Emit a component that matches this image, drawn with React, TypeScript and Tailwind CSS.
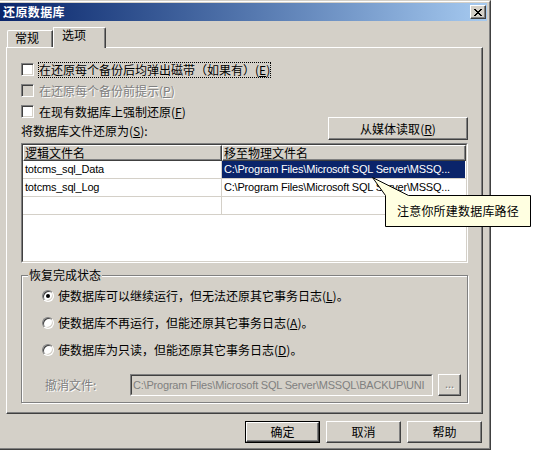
import type { ReactNode } from "react";

type FileRow = {
  name: string;
  path: string;
  selected?: boolean;
};

const fileRows: FileRow[] = [
  {
    name: "totcms_sql_Data",
    path: "C:\\Program Files\\Microsoft SQL Server\\MSSQ...",
    selected: true,
  },
  {
    name: "totcms_sql_Log",
    path: "C:\\Program Files\\Microsoft SQL Server\\MSSQ...",
  },
  { name: "", path: "" },
];

const raised =
  "border border-t-white border-l-white border-r-[#404040] border-b-[#404040] shadow-[inset_-1px_-1px_0_#808080] bg-[#d4d0c8]";

const disabledText = "text-[#808080] [text-shadow:1px_1px_0_#fff]";

function Key({ k }: { k: string }) {
  return (
    <>
      (<u>{k}</u>)
    </>
  );
}

function CheckBox({ disabled }: { disabled?: boolean }) {
  return (
    <span
      className={`block h-[13px] w-[13px] shrink-0 border border-t-[#808080] border-l-[#808080] border-r-white border-b-white shadow-[inset_1px_1px_0_#404040,inset_-1px_-1px_0_#d4d0c8] ${
        disabled ? "bg-[#d4d0c8]" : "bg-white"
      }`}
    />
  );
}

function CheckRow({
  children,
  disabled,
  focused,
}: {
  children: ReactNode;
  disabled?: boolean;
  focused?: boolean;
}) {
  return (
    <div className="flex h-[13px] items-center gap-[4px]">
      <CheckBox disabled={disabled} />
      <span
        className={`border leading-[14px] whitespace-nowrap ${
          focused ? "border-dotted border-black" : "border-transparent"
        } ${disabled ? disabledText : ""}`}
      >
        {children}
      </span>
    </div>
  );
}

function Radio({ checked }: { checked?: boolean }) {
  return (
    <span className="flex h-[12px] w-[12px] shrink-0 items-center justify-center rounded-full border border-t-[#808080] border-l-[#808080] border-r-white border-b-white bg-white shadow-[inset_1px_1px_0_#404040,inset_-1px_-1px_0_#d4d0c8]">
      {checked ? <span className="h-[4px] w-[4px] rounded-full bg-black" /> : null}
    </span>
  );
}

function RadioRow({ children, checked }: { children: ReactNode; checked?: boolean }) {
  return (
    <div className="flex h-[14px] items-center gap-[4px] whitespace-nowrap leading-[14px]">
      <Radio checked={checked} />
      <span>{children}</span>
    </div>
  );
}

function CloseGlyph() {
  return (
    <svg width="8" height="7" viewBox="0 0 8 7" shapeRendering="crispEdges">
      <path
        fill="#000"
        d="M0 0h2v1h-2z M6 0h2v1h-2z M1 1h2v1h-2z M5 1h2v1h-2z M2 2h4v1h-4z M3 3h2v1h-2z M2 4h4v1h-4z M1 5h2v1h-2z M5 5h2v1h-2z M0 6h2v1h-2z M6 6h2v1h-2z"
      />
    </svg>
  );
}

function FileList() {
  return (
    <div className="mt-[3px] h-[120px] border border-t-[#808080] border-l-[#808080] border-r-white border-b-white">
      <div className="h-full border border-t-[#404040] border-l-[#404040] border-r-[#d4d0c8] border-b-[#d4d0c8] bg-white">
        <div className="flex h-[16px] leading-[14px]">
          <div className={`w-[199px] pl-[1px] ${raised}`}>逻辑文件名</div>
          <div className={`flex-1 pl-[1px] ${raised}`}>移至物理文件名</div>
        </div>
        <div className="[font-family:'Liberation_Sans','Noto_Sans_CJK_SC',sans-serif] text-[11px] tracking-[-0.2px]">
          {fileRows.map((row, i) => (
            <div key={i} className="flex h-[18px] border-b border-[#d4d0c8]">
              <div className="flex w-[199px] items-center border-r border-[#d4d0c8] pl-[2px]">
                {row.name}
              </div>
              <div
                className={`flex w-[243px] items-center pl-[2px] whitespace-nowrap ${
                  row.selected ? "bg-[#0a246a] text-white" : ""
                }`}
              >
                {row.path}
              </div>
            </div>
          ))}
        </div>
      </div>
    </div>
  );
}

function RecoveryGroup() {
  return (
    <div className="mt-[12px] flex h-[128px] flex-col border border-[#808080] shadow-[1px_1px_0_#fff,inset_1px_1px_0_#fff]">
      <span className="-mt-[8px] ml-[6px] h-[14px] w-fit bg-[#d4d0c8] px-[1px] leading-[14px]">
        恢复完成状态
      </span>
      <div className="mt-[7px] flex flex-col gap-[13px] pl-[20px]">
        <RadioRow checked>
          使数据库可以继续运行，但无法还原其它事务日志<Key k="L" />。
        </RadioRow>
        <RadioRow>
          使数据库不再运行，但能还原其它事务日志<Key k="A" />。
        </RadioRow>
        <RadioRow>
          使数据库为只读，但能还原其它事务日志<Key k="D" />。
        </RadioRow>
      </div>
      <div className="mt-[17px] flex h-[22px] items-center pl-[23px]">
        <span className={`w-[85px] leading-[14px] ${disabledText}`}>撤消文件:</span>
        <div className="h-[22px] w-[303px] border border-t-[#808080] border-l-[#808080] border-r-white border-b-white">
          <div className="flex h-full items-center overflow-hidden border border-t-[#404040] border-l-[#404040] border-r-[#d4d0c8] border-b-[#d4d0c8] pl-[1px] whitespace-nowrap [font-family:'Liberation_Sans',sans-serif] text-[11px] tracking-[-0.2px] text-[#808080]">
            C:\Program Files\Microsoft SQL Server\MSSQL\BACKUP\UNI
          </div>
        </div>
        <div
          className={`ml-[5px] flex h-[22px] w-[23px] items-center justify-center pb-[3px] text-[11px] ${raised} ${disabledText}`}
        >
          ...
        </div>
      </div>
    </div>
  );
}

export default function App() {
  return (
    <div className="relative h-[450px] w-[539px] overflow-hidden bg-white text-[12px] text-black [font-family:'Noto_Sans_CJK_SC',sans-serif]">
      <div className="h-[450px] w-[491px] border-t border-r border-b border-t-[#d4d0c8] border-r-[#404040] border-b-[#404040] bg-[#d4d0c8]">
        <div className="flex h-full flex-col border-t border-r border-b border-t-white border-r-[#808080] border-b-[#808080] pt-[1px]">
          {/* title bar */}
          <div className="mr-[2px] flex h-[18px] items-center justify-between bg-linear-to-r from-[#0a246a] to-[#a6caf0] pl-[3px] pr-[1px]">
            <span className="font-bold leading-[14px] tracking-[0.4px] text-white">还原数据库</span>
            <span className={`flex h-[14px] w-[16px] items-center justify-center ${raised}`}>
              <CloseGlyph />
            </span>
          </div>

          {/* tabs */}
          <div className="relative z-10 -mb-px ml-[7px] mt-[6px] flex items-start leading-[14px]">
            <div className="mt-[3px] h-[17px] w-[46px] rounded-tl-[2px] border-t border-l border-r border-t-white border-l-white border-r-[#404040] pl-[7px] shadow-[inset_-1px_0_0_#808080]">
              常规
            </div>
            <div className="h-[21px] w-[53px] rounded-tr-[2px] border-t border-l border-r border-t-white border-l-white border-r-[#404040] bg-[#d4d0c8] pl-[8px] shadow-[inset_-1px_0_0_#808080]">
              选项
            </div>
          </div>

          {/* tab page */}
          <div className="ml-[6px] flex h-[367px] w-[477px] flex-col border border-t-white border-l-white border-r-[#404040] border-b-[#404040] px-[14px] pt-[15px] shadow-[inset_-1px_-1px_0_#808080]">
            <div className="flex items-start justify-between">
              <div className="flex flex-col">
                <div className="flex flex-col gap-[8px]">
                  <CheckRow focused>
                    在还原每个备份后均弹出磁带（如果有）<Key k="E" />
                  </CheckRow>
                  <CheckRow disabled>
                    在还原每个备份前提示<Key k="P" />
                  </CheckRow>
                  <CheckRow>
                    在现有数据库上强制还原<Key k="F" />
                  </CheckRow>
                </div>
                <span className="mt-[6px] h-[14px] leading-[14px]">
                  将数据库文件还原为<Key k="S" />:
                </span>
              </div>
              <button
                type="button"
                className={`mt-[54px] h-[23px] w-[140px] leading-[14px] ${raised}`}
              >
                从媒体读取<Key k="R" />
              </button>
            </div>

            <FileList />
            <RecoveryGroup />
          </div>

          {/* dialog buttons */}
          <div className="mt-[7px] flex justify-end gap-[6px] pr-[7px]">
            <div className="h-[22px] w-[75px] border border-black">
              <button type="button" className={`h-full w-full leading-[14px] ${raised}`}>
                确定
              </button>
            </div>
            <button type="button" className={`h-[22px] w-[75px] leading-[14px] ${raised}`}>
              取消
            </button>
            <button type="button" className={`h-[22px] w-[75px] leading-[14px] ${raised}`}>
              帮助
            </button>
          </div>
        </div>
      </div>

      {/* balloon callout over the file list */}
      <svg
        className="pointer-events-none absolute left-0 top-0"
        width="539"
        height="450"
        viewBox="0 0 539 450"
      >
        <path
          d="M372.5 177.5 L408.5 195.5 H530.5 V226.5 H385.5 V195.5 Z"
          fill="#ffffe1"
          stroke="#000"
          strokeWidth="1"
        />
      </svg>
      <div className="pointer-events-none absolute left-[386px] top-[196px] flex h-[30px] w-[144px] items-center justify-center tracking-[0.2px] leading-[14px]">
        注意你所建数据库路径
      </div>
    </div>
  );
}
